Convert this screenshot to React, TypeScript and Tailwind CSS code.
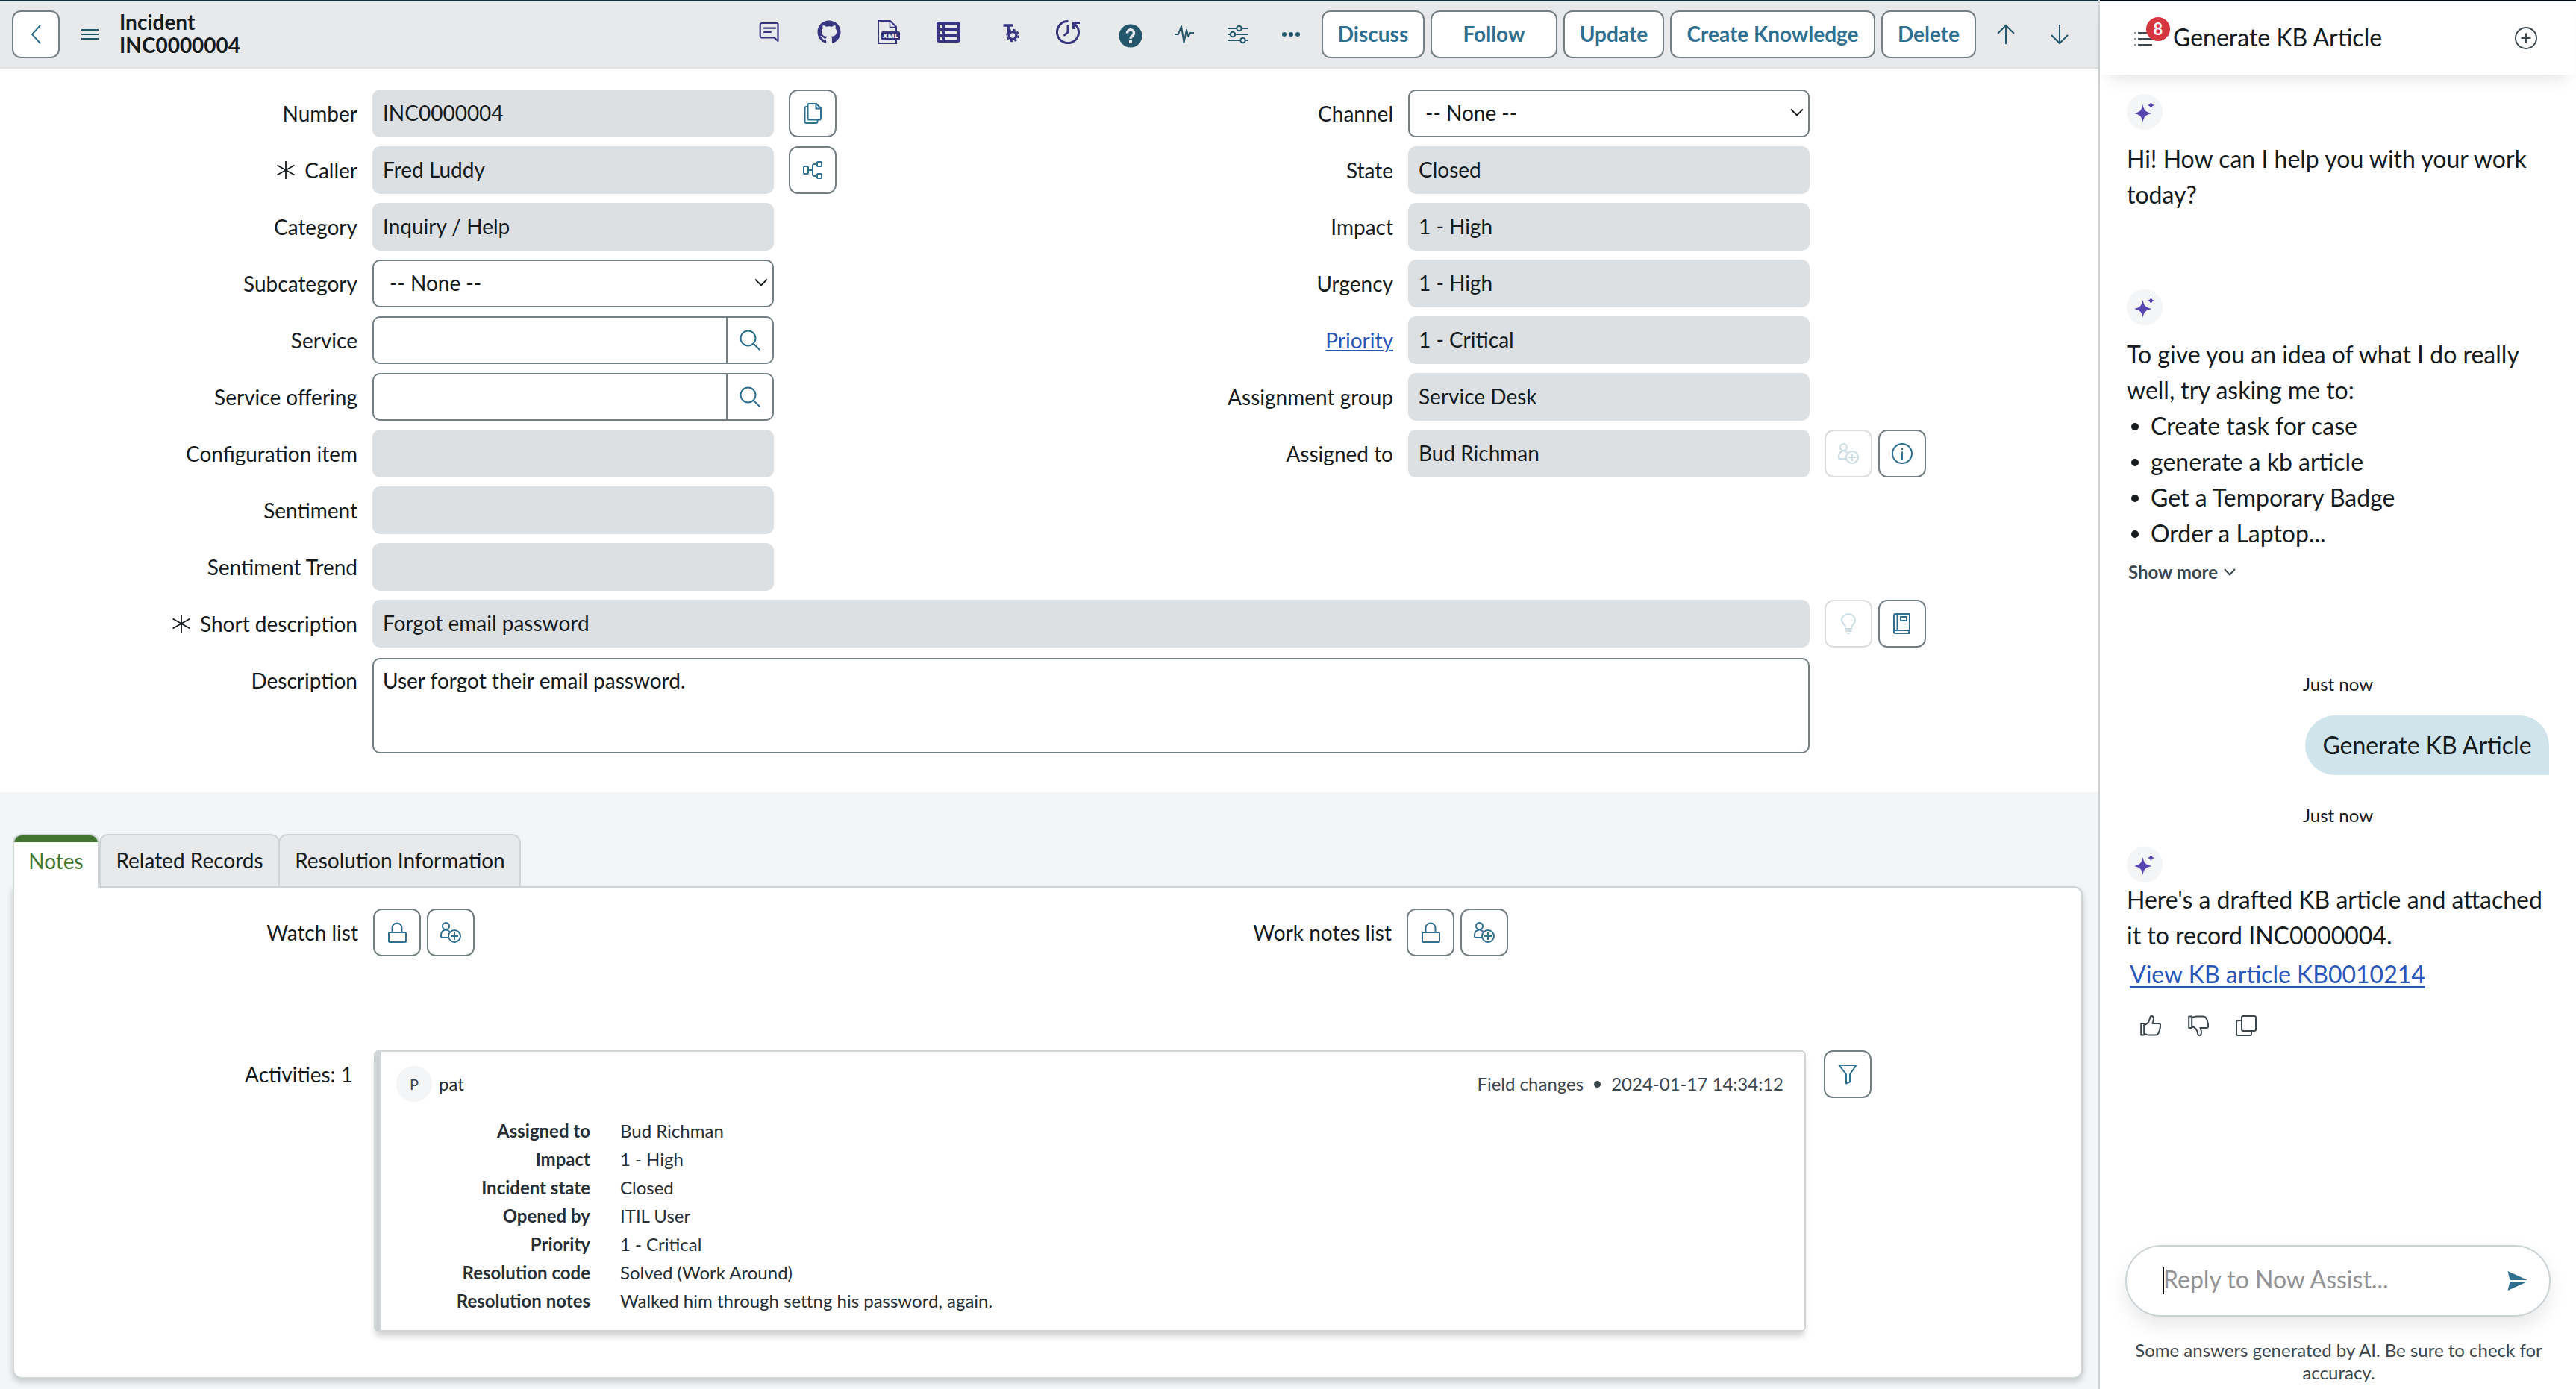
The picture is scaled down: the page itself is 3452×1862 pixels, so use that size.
import type { ReactNode } from "react"
import { FaGithub } from "react-icons/fa"

type IconProps = { className?: string }

const Svg = ({ size = 28, className = '', children }: { size?: number; className?: string; children: ReactNode }) => (
  <svg
    width={size}
    height={size}
    viewBox={`0 0 ${size} ${size}`}
    fill="none"
    stroke="currentColor"
    strokeWidth="2"
    className={`shrink-0 ${className}`}
  >
    {children}
  </svg>
)

const CopyFileIcon = () => (
  <Svg>
    <path d="M9 1h10l6 6v14a1.500 1.500 0 0 1-1.500 1.500H9A1.500 1.500 0 0 1 7.500 21V2.500A1.500 1.500 0 0 1 9 1z" />
    <path d="M18.500 1.500V7.500H25" />
    <path d="M7.500 5H5.500A2 2 0 0 0 3.500 7v18a2 2 0 0 0 2 2h13a2 2 0 0 0 2-2v-2.500" />
  </Svg>
)

const TreeIcon = () => (
  <Svg>
    <rect x="2" y="9" width="6" height="10" rx="1" />
    <rect x="20" y="3" width="6" height="6" rx="1" />
    <rect x="20" y="19" width="6" height="6" rx="1" />
    <path d="M8 14h6M20 6h-4a2 2 0 0 0-2 2v12a2 2 0 0 0 2 2h4" />
  </Svg>
)

const UserAddIcon = () => (
  <Svg>
    <circle cx="7.500" cy="5.500" r="4.500" />
    <path d="M12 21H3a2 2 0 0 1-2-2v-2c0-3.500 3-6.500 6.500-6.500 2 0 3.800 1 5 2.400" />
    <circle cx="19" cy="19" r="8" />
    <path d="M19 14v10M14 19h10" />
  </Svg>
)

const InfoIcon = () => (
  <Svg>
    <circle cx="14" cy="14" r="13" />
    <path d="M14 11.500V22M14 7v2" />
  </Svg>
)

const BulbIcon = () => (
  <Svg>
    <path d="M10 21v-2c0-1.500-.7-2.600-1.600-3.800A8.700 8.700 0 0 1 5 9.500C5 4.800 9 1 14 1s9 3.800 9 8.500c0 2.200-1 4.200-2.600 5.700-1.200 1.200-2.400 2.300-2.400 3.800v2z" />
    <path d="M10 24h8M12 27h4" />
  </Svg>
)

const BookIcon = () => (
  <Svg>
    <path d="M25 23H5a2 2 0 0 0-2 2 2 2 0 0 0 2 2h20M3 25V3a2 2 0 0 1 2-2h19v22M7.500 1v22M23 23v4" />
    <rect x="12" y="5" width="8" height="5" />
  </Svg>
)

const LockIcon = () => (
  <Svg>
    <rect x="3" y="14" width="23" height="13" rx="1.500" />
    <path d="M7.500 14V8a6.500 6.500 0 0 1 13 0v6" />
  </Svg>
)

const FilterIcon = () => (
  <Svg>
    <path d="M2.500 2h23L17 14v10.500l-5 2V14z" strokeLinejoin="round" />
  </Svg>
)

const SearchIcon = () => (
  <Svg className="text-[#2f6f8f]">
    <circle cx="11.500" cy="11.500" r="10" />
    <path d="M18.800 18.800l8.500 8.500" />
  </Svg>
)

const NoteIcon = () => (
  <Svg size={32}>
    <path d="M6 4h20a1.500 1.500 0 0 1 1.500 1.500V28l-5-4.600H6A2.300 2.300 0 0 1 3.700 21V6.300A2.300 2.300 0 0 1 6 4z" strokeWidth="2.200" strokeLinejoin="round" />
    <path d="M9 10.700h15M9 16h9" strokeWidth="2.200" strokeLinecap="round" />
  </Svg>
)

const XmlIcon = () => (
  <Svg size={32}>
    <path d="M26 16V9l-8-8H2v30h24v-4" />
    <path d="M17.500 1v8.500H26" strokeWidth="1.500" />
    <rect x="6" y="15" width="25" height="12" rx="2" fill="currentColor" stroke="none" />
    <text x="18.500" y="24.400" fontSize="9.200" fontWeight="800" fontFamily="Open Sans" textAnchor="middle" fill="#e7e9eb" stroke="none">XML</text>
  </Svg>
)

const TableIcon = () => (
  <Svg size={32}>
    <rect x="0" y="2" width="32" height="28" rx="4" fill="currentColor" stroke="none" />
    <path d="M4 8.200h4M12 8.200h16M4 16h4M12 16h16M4 24h4M12 24h16" stroke="#e7e9eb" strokeWidth="4.200" />
  </Svg>
)

const TextGearIcon = () => (
  <Svg size={32}>
    <path d="M5.500 7h13.500M12.500 7v12" strokeWidth="3.400" />
    <circle cx="18" cy="20.500" r="4.900" strokeWidth="3.400" />
    <circle cx="18" cy="20.500" r="7.600" strokeWidth="2.400" strokeDasharray="3.400 2.570" />
  </Svg>
)

const HistoryIcon = () => (
  <Svg size={32}>
    <path d="M16.500 1.600A14.500 14.500 0 1 0 28 8" strokeWidth="3" />
    <path d="M22 3.500h10M23.500 2.500v9.500M24 4l4.500 5" strokeWidth="3" />
    <path d="M16 7.500v8.500l-4.500 4" strokeWidth="3" strokeLinecap="round" />
  </Svg>
)

const HelpIcon = () => (
  <Svg size={32}>
    <circle cx="16" cy="16" r="15.500" fill="currentColor" stroke="none" />
    <path d="M11.500 12.500a4.500 4.500 0 1 1 7.500 3.200c-1.800 1.300-3 1.700-3 4" stroke="#e7e9eb" strokeWidth="3.600" />
    <rect x="14" y="22" width="4" height="4" fill="#e7e9eb" stroke="none" />
  </Svg>
)

const PulseIcon = () => (
  <Svg size={32}>
    <path d="M3 16h5l4-11 3.500 22 3.500-17 2.500 9 2.500-5h5" strokeLinejoin="round" />
  </Svg>
)

const SlidersIcon = () => (
  <Svg size={32}>
    <path d="M3 8h12M22 8h8M3 16h4M14 16h16M3 24h17M27 24h3" />
    <circle cx="18.500" cy="8" r="3.200" />
    <circle cx="10" cy="16" r="3.200" />
    <circle cx="23.500" cy="24" r="3.200" />
  </Svg>
)

const DotsIcon = () => (
  <Svg size={32}>
    <g fill="currentColor" stroke="none">
      <circle cx="7" cy="16" r="3" />
      <circle cx="16" cy="16" r="3" />
      <circle cx="25" cy="16" r="3" />
    </g>
  </Svg>
)

const ArrowIcon = ({ className = '' }: IconProps) => (
  <Svg className={className}>
    <path d="M14 27V2M3 13L14 2l11 11" />
  </Svg>
)

const SparkleIcon = () => (
  <div className="flex size-12 items-center justify-center rounded-full bg-[#f4f5f7] text-[#5a46b2]">
    <svg width="28" height="28" viewBox="0 0 28 28" fill="currentColor">
      <path d="M11.500 4c1.200 7.500 4 10.500 12 12-8 1.500-10.800 4.500-12 12C10.300 20.500 7.500 17.500-.5 16c8-1.500 10.800-4.500 12-12z" />
      <path d="M22.500 0c.7 3.200 2 4.500 5.500 5-3.500.6-4.800 1.800-5.500 5-.7-3.200-2-4.400-5.500-5 3.500-.5 4.800-1.800 5.500-5z" />
    </svg>
  </div>
)

const ThumbIcon = ({ className = '' }: IconProps) => (
  <Svg className={className}>
    <path d="M1.200 11h4v15.500h-4zM5.200 13c4.500-1 6.600-4 7.500-8 .4-2.500 1-4 2.300-4 2 0 3 1.500 3 4 0 2-.8 4-1.500 6h8c2 0 3 1.200 2.700 3.200-.3 3.800-1.300 7.300-3 10.300-.8 1.500-2 2-3.700 2h-9c-2.500 0-4-1-6.300-1.700" strokeLinejoin="round" />
  </Svg>
)

const CopyIcon = () => (
  <Svg>
    <rect x="8" y="1" width="19" height="20" rx="2" />
    <path d="M8 7H3a2 2 0 0 0-2 2v16a2 2 0 0 0 2 2h16a2 2 0 0 0 2-2v-4" />
  </Svg>
)

const Star = () => (
  <Svg size={26} className="mr-3">
    <path d="M13 1v24M1.500 6.500l23 13M24.500 6.500l-23 13" strokeWidth="1.800" />
  </Svg>
)

const IconButton = ({ children, disabled = false }: { children: ReactNode; disabled?: boolean }) => (
  <button
    className={`flex size-16 shrink-0 items-center justify-center rounded-[12px] border-2 bg-white ${
      disabled ? 'border-[#dadfde] text-[#cbdde5]' : 'border-[#747f83] text-[#2f6f8f]'
    }`}
  >
    {children}
  </button>
)

type FieldData = {
  label: string
  value?: string
  kind?: 'readonly' | 'select' | 'lookup'
  required?: boolean
  link?: boolean
  actions?: ReactNode
}

const FieldLabel = ({ label, required, link }: FieldData) => (
  <div className="flex w-[479px] shrink-0 items-center justify-end">
    {required && <Star />}
    <span className={link ? 'text-[#2a56b9] underline underline-offset-2' : ''}>{label}</span>
  </div>
)

const Field = (field: FieldData) => {
  const { value = '', kind = 'readonly', actions } = field
  return (
    <div className="flex h-16">
      <FieldLabel {...field} />
      {kind === 'readonly' && (
        <div className="ml-5 flex w-[538px] items-center rounded-[10px] bg-[#dce0e3] px-3.5 pb-0.5">{value}</div>
      )}
      {kind === 'select' && (
        <div className="ml-5 flex w-[538px] items-center justify-between rounded-[10px] border-2 border-[#747f83] pr-1.5 pl-[21px] pb-0.5">
          {value}
          <svg width="18" height="12" viewBox="0 0 18 12" fill="none" stroke="currentColor" strokeWidth="1.800">
            <path d="M1 1.500l8 8 8-8" />
          </svg>
        </div>
      )}
      {kind === 'lookup' && (
        <div className="ml-5 flex w-[538px] rounded-[10px] border-2 border-[#747f83]">
          <div className="grow" />
          <div className="flex w-[62px] items-center justify-center border-l-2 border-[#747f83]">
            <SearchIcon />
          </div>
        </div>
      )}
      {actions && <div className="ml-5 flex gap-2">{actions}</div>}
    </div>
  )
}

const leftFields: FieldData[] = [
  { label: 'Number', value: 'INC0000004', actions: <IconButton><CopyFileIcon /></IconButton> },
  { label: 'Caller', value: 'Fred Luddy', required: true, actions: <IconButton><TreeIcon /></IconButton> },
  { label: 'Category', value: 'Inquiry / Help' },
  { label: 'Subcategory', value: '-- None --', kind: 'select' },
  { label: 'Service', kind: 'lookup' },
  { label: 'Service offering', kind: 'lookup' },
  { label: 'Configuration item' },
  { label: 'Sentiment' },
  { label: 'Sentiment Trend' },
]

const rightFields: FieldData[] = [
  { label: 'Channel', value: '-- None --', kind: 'select' },
  { label: 'State', value: 'Closed' },
  { label: 'Impact', value: '1 - High' },
  { label: 'Urgency', value: '1 - High' },
  { label: 'Priority', value: '1 - Critical', link: true },
  { label: 'Assignment group', value: 'Service Desk' },
  {
    label: 'Assigned to',
    value: 'Bud Richman',
    actions: (
      <>
        <IconButton disabled><UserAddIcon /></IconButton>
        <IconButton><InfoIcon /></IconButton>
      </>
    ),
  },
]

const headerButtons = [
  { label: 'Discuss', width: 'w-[138px]' },
  { label: 'Follow', width: 'w-[170px]' },
  { label: 'Update', width: 'w-[135px]' },
  { label: 'Create Knowledge', width: 'w-[275px]' },
  { label: 'Delete', width: 'w-[127px]' },
]

const activityRows = [
  { label: 'Assigned to', value: 'Bud Richman' },
  { label: 'Impact', value: '1 - High' },
  { label: 'Incident state', value: 'Closed' },
  { label: 'Opened by', value: 'ITIL User' },
  { label: 'Priority', value: '1 - Critical' },
  { label: 'Resolution code', value: 'Solved (Work Around)' },
  { label: 'Resolution notes', value: 'Walked him through settng his password, again.' },
]

const suggestions = ['Create task for case', 'generate a kb article', 'Get a Temporary Badge', 'Order a Laptop...']

const Header = () => (
  <header className="flex h-[92px] shrink-0 items-center border-t-2 border-b-2 border-t-[#14303f] border-b-[#dfe3e3] bg-[#e7e9eb] pl-4">
    <IconButton>
      <Svg>
        <path d="M20 2L9 14l11 12" />
      </Svg>
    </IconButton>
    <svg width="23" height="16" viewBox="0 0 23 16" stroke="#23566b" strokeWidth="2" className="ml-[29px]">
      <path d="M0 2h23M0 8h23M0 14h23" />
    </svg>
    <div className="mb-0.5 ml-7 w-[855px] font-bold leading-[31px]">
      <div>Incident</div>
      <div>INC0000004</div>
    </div>
    <div className="mb-1.5 flex items-center text-[#37357f]">
      <NoteIcon />
      <FaGithub className="ml-12 size-8" />
      <div className="ml-12"><XmlIcon /></div>
      <div className="ml-12"><TableIcon /></div>
      <div className="ml-[52px]"><TextGearIcon /></div>
      <div className="ml-11"><HistoryIcon /></div>
    </div>
    <div className="flex items-center text-[#23566b]">
      <div className="mt-1 ml-[52px]"><HelpIcon /></div>
      <div className="ml-10"><PulseIcon /></div>
      <div className="ml-[39px]"><SlidersIcon /></div>
      <div className="ml-10"><DotsIcon /></div>
    </div>
    <div className="ml-[25px] flex gap-2">
      {headerButtons.map((button) => (
        <button
          key={button.label}
          className={`h-16 rounded-[12px] border-2 border-[#747f83] bg-white pb-0.5 font-bold whitespace-nowrap text-[#2f6f8f] ${button.width}`}
        >
          {button.label}
        </button>
      ))}
    </div>
    <div className="ml-[26px] flex gap-11 text-[#23566b]">
      <ArrowIcon />
      <ArrowIcon className="rotate-180" />
    </div>
  </header>
)

const IncidentForm = () => (
  <section className="bg-white pt-7 pb-[52px]">
    <div className="flex">
      <div className="flex w-[1388px] flex-col gap-3">
        {leftFields.map((field) => <Field key={field.label} {...field} />)}
      </div>
      <div className="flex flex-col gap-3">
        {rightFields.map((field) => <Field key={field.label} {...field} />)}
      </div>
    </div>
    <div className="mt-3 flex h-16">
      <FieldLabel label="Short description" required />
      <div className="ml-5 flex w-[1926px] items-center rounded-[10px] bg-[#dce0e3] px-3.5 pb-0.5">Forgot email password</div>
      <div className="ml-5 flex gap-2">
        <IconButton disabled><BulbIcon /></IconButton>
        <IconButton><BookIcon /></IconButton>
      </div>
    </div>
    <div className="mt-[14px] flex">
      <div className="-mt-0.5 flex h-16">
        <FieldLabel label="Description" />
      </div>
      <div className="ml-5 h-32 w-[1926px] rounded-[10px] border-2 border-[#747f83] px-3 pt-2.5 leading-9">
        User forgot their email password.
      </div>
    </div>
  </section>
)

const WatchList = ({ label }: { label: string }) => (
  <div className="flex h-16 w-[1387px] items-center">
    <div className="w-[461px] text-right">{label}</div>
    <div className="ml-5 flex gap-2">
      <IconButton><LockIcon /></IconButton>
      <IconButton><UserAddIcon /></IconButton>
    </div>
  </div>
)

const ActivityCard = () => (
  <div className="ml-7 h-[377px] w-[1919px] rounded-[6px] border-2 border-l-[10px] border-[#cfd4d7] pt-[19px] pr-7 pl-5 text-2xl text-[#272f34] shadow-[0_8px_8px_-2px_rgba(0,0,0,0.18)]">
    <div className="flex h-12 items-center leading-7">
      <div className="flex size-12 items-center justify-center rounded-full bg-[#f4f5f7] text-xl text-[#3c464d]">P</div>
      <span className="ml-[9px]">pat</span>
      <span className="ml-auto text-[#3c464d]">Field changes</span>
      <span className="mx-[14px] size-[9px] rounded-full bg-[#3c464d]" />
      <span className="text-[#3c464d]">2024-01-17 14:34:12</span>
    </div>
    <div className="mt-5">
      {activityRows.map((row) => (
        <div key={row.label} className="flex leading-[38px]">
          <div className="w-[260px] text-right font-bold">{row.label}</div>
          <div className="ml-10">{row.value}</div>
        </div>
      ))}
    </div>
  </div>
)

const NotesSection = () => (
  <section className="grow bg-[#f4f5f7] pt-14 pl-[17px]">
    <div className="relative -mb-0.5 flex">
      <div className="flex h-[72px] w-[116px] items-center justify-center overflow-hidden rounded-t-[12px] border-x-2 border-t-2 border-[#cfd4d7] bg-white bg-linear-to-b from-[#41752f] from-[9px] to-transparent to-[9px] pb-0.5 text-[#41752f]">
        Notes
      </div>
      <div className="flex h-[72px] w-[242px] items-center justify-center rounded-t-[12px] border-2 border-[#cfd4d7] bg-[#e7e9eb] pb-0.5">
        Related Records
      </div>
      <div className="-ml-0.5 flex h-[72px] w-[325px] items-center justify-center rounded-t-[12px] border-2 border-[#cfd4d7] bg-[#e7e9eb] pb-0.5 pl-px">
        Resolution Information
      </div>
    </div>
    <div className="h-[660px] w-[2774px] rounded-[12px] rounded-tl-none border-2 border-[#cfd4d7] bg-white pt-7 shadow-[0_4px_8px_rgba(0,0,0,0.2)]">
      <div className="flex">
        <WatchList label="Watch list" />
        <WatchList label="Work notes list" />
      </div>
      <div className="mt-[126px] flex">
        <div className="mt-[15px] w-[454px] text-right leading-[34px]">Activities: 1</div>
        <ActivityCard />
        <div className="ml-6">
          <IconButton><FilterIcon /></IconButton>
        </div>
      </div>
    </div>
  </section>
)

const AssistPanel = () => (
  <aside className="flex w-[640px] flex-col border-l-2 border-[#cfd2d5] bg-white text-[32px] leading-[48px]">
    <div className="border-t-2 border-[#040b17] px-0.5">
      <div className="flex h-[98px] items-center pr-[50px] pl-11 shadow-[0_14px_22px_-10px_rgba(0,0,0,0.12)]">
        <div className="relative mt-0.5">
          <svg width="24" height="20" viewBox="0 0 24 20" stroke="#3c464d" strokeWidth="1.800">
            <path d="M0 2h2M0 10h2M0 18h2" opacity="0.6" />
            <path d="M5 2h19M5 10h19M5 18h19" />
          </svg>
          <div className="absolute -top-[19px] left-4 flex size-8 items-center justify-center rounded-full bg-[#d6363f] text-[22px] font-bold text-white">8</div>
        </div>
        <div className="mb-0.5 ml-7">Generate KB Article</div>
        <Svg size={30} className="ml-auto text-[#3c464d]">
          <circle cx="15" cy="15" r="14" />
          <path d="M15 8.500v13M8.500 15h13" />
        </Svg>
      </div>
    </div>
    <div className="flex flex-col pt-[26px] pr-9 pl-9">
      <SparkleIcon />
      <p className="mt-[15px] whitespace-nowrap">Hi! How can I help you with your work<br />today?</p>
      <div className="mt-[103px]"><SparkleIcon /></div>
      <p className="mt-[15px] whitespace-nowrap">To give you an idea of what I do really<br />well, try asking me to:</p>
      <ul>
        {suggestions.map((item) => (
          <li key={item} className="flex items-center">
            <span className="mt-0.5 mr-4 ml-1.5 size-2.5 rounded-full bg-[#151a1c]" />
            {item}
          </li>
        ))}
      </ul>
      <div className="mt-2.5 flex items-center pl-0.5 text-2xl leading-9 font-bold text-[#3c464d]">
        Show more
        <svg width="16" height="12" viewBox="0 0 16 12" fill="none" stroke="currentColor" strokeWidth="2" className="ml-2">
          <path d="M1 2l7 7.500L15 2" />
        </svg>
      </div>
      <div className="mt-[114px] text-center text-2xl leading-9">Just now</div>
      <div className="mt-6 flex h-20 w-[327px] items-center justify-center self-end rounded-[40px] rounded-br-none bg-[#d0e4eb]">
        Generate KB Article
      </div>
      <div className="mt-9 text-center text-2xl leading-9">Just now</div>
      <div className="mt-6"><SparkleIcon /></div>
      <p className="-mt-px whitespace-nowrap">Here's a drafted KB article and attached<br />it to record INC0000004.</p>
      <a className="mt-1 pl-1 text-[#2a56b9] underline decoration-[3px] underline-offset-4">View KB article KB0010214</a>
      <div className="mt-[31px] flex gap-9 pl-[18px] text-[#3c464d]">
        <ThumbIcon />
        <ThumbIcon className="-scale-y-100" />
        <CopyIcon />
      </div>
    </div>
    <div className="mt-auto pr-8 pb-[7px] pl-[34px]">
      <div className="flex h-24 w-[570px] items-center rounded-full border-2 border-[#ccd3d6] pr-7 pl-12 text-[#939393] shadow-[0_12px_24px_rgba(0,0,0,0.09)]">
        <span className="h-9 w-0.5 bg-black" />
        <span className="-ml-px mb-1">Reply to Now Assist...</span>
        <svg width="28" height="28" viewBox="0 0 28 28" fill="#2f6f8f" className="ml-auto">
          <path d="M.5 1L27 13H3.500zM.5 27L27 15H3.500z" />
        </svg>
      </div>
      <p className="mt-[30px] text-center text-2xl leading-[30px] text-[#3c464d]">
        Some answers generated by AI. Be sure to check for<br />accuracy.
      </p>
    </div>
  </aside>
)

const App = () => {
  return (
    <div className="flex h-[1862px] w-[3452px] overflow-hidden bg-white font-['Lato',sans-serif] text-[28px] text-[#151a1c]">
      <main className="flex w-[2812px] flex-col overflow-hidden">
        <Header />
        <IncidentForm />
        <NotesSection />
      </main>
      <AssistPanel />
    </div>
  )
}

export default App
